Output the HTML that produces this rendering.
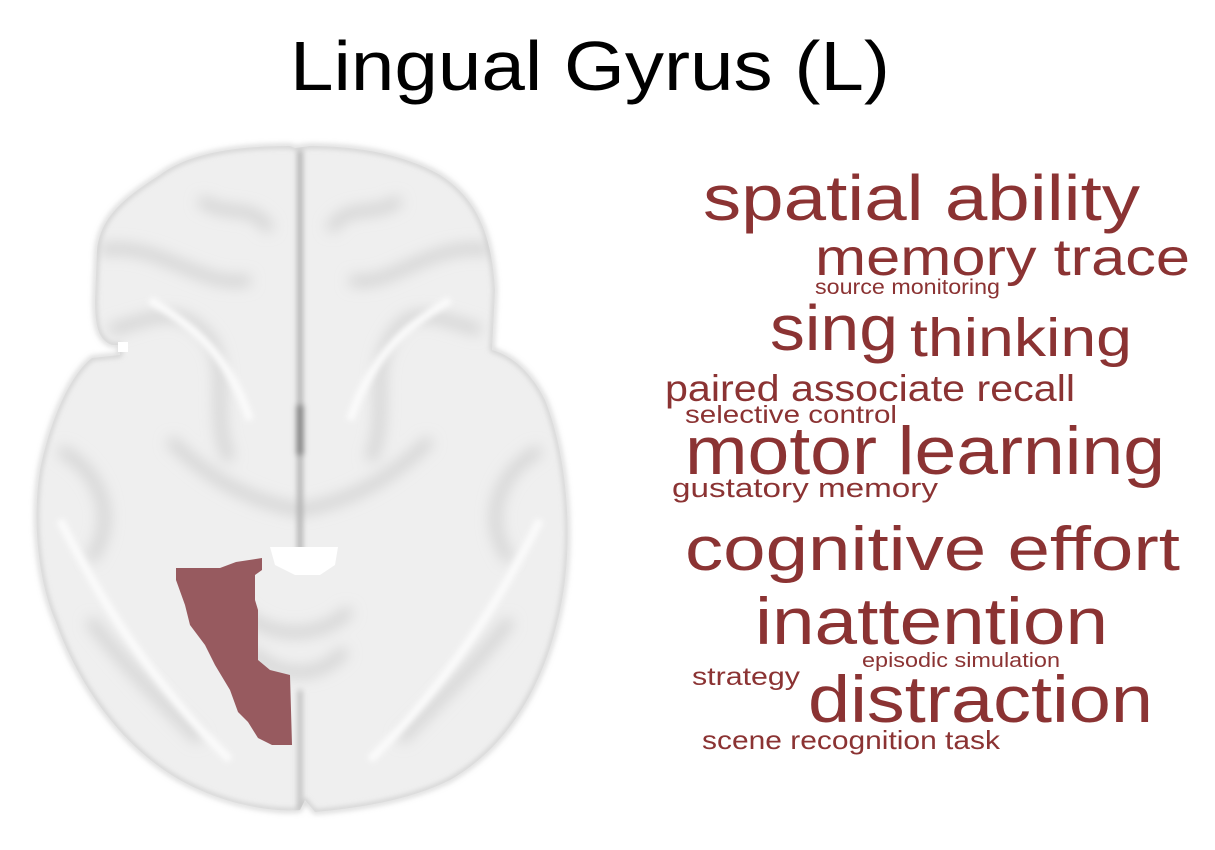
<!DOCTYPE html>
<html><head><meta charset="utf-8"><style>
html,body{margin:0;padding:0;background:#fff;width:1215px;height:850px;overflow:hidden}
</style></head><body>
<svg width="1215" height="850" viewBox="0 0 1215 850" xmlns="http://www.w3.org/2000/svg">
<defs>
<filter id="b" filterUnits="userSpaceOnUse" x="0" y="100" width="650" height="750"><feGaussianBlur stdDeviation="7"/></filter>
<filter id="b2" filterUnits="userSpaceOnUse" x="0" y="100" width="650" height="750"><feGaussianBlur stdDeviation="3"/></filter>
<clipPath id="brain"><path d="M295,148 L290,146 C240,146 190,152 160,175 C120,200 100,220 97,250 L95,300 C95,325 98,340 112,345 L120,345 L120,355 L92,358 C70,375 50,420 40,470 C32,520 38,580 55,620 C80,690 130,760 200,790 C240,808 280,812 300,810 L305,800 L315,812 C360,808 410,800 450,780 C520,740 555,660 565,580 C572,520 565,450 545,400 C530,370 510,355 492,350 L495,290 C492,240 480,200 440,175 C400,152 350,146 310,146 Z"/></clipPath>
</defs>
<text x="590" y="90" text-anchor="middle" font-family="Liberation Sans, sans-serif" font-size="70" fill="#000" textLength="600" lengthAdjust="spacingAndGlyphs">Lingual Gyrus (L)</text>

<g clip-path="url(#brain)">
<rect x="0" y="130" width="620" height="700" fill="#efefef"/>
<g fill="none" stroke="#d0d0d0" stroke-width="10" filter="url(#b)">
<path d="M100,250 C160,240 200,290 250,280"/>
<path d="M490,250 C430,240 390,290 350,280"/>
<path d="M110,330 C150,320 180,300 210,340 C230,370 210,420 230,460"/>
<path d="M480,330 C440,320 410,300 390,340 C370,370 390,420 370,460"/>
<path d="M60,450 C100,470 120,520 90,560"/>
<path d="M540,450 C500,470 480,520 510,560"/>
<path d="M170,440 C200,470 240,500 300,510 C360,500 400,470 430,440"/>
<path d="M240,610 C270,640 320,640 350,610"/>
<path d="M250,650 C280,680 320,680 345,650"/>
<path d="M90,620 C120,660 160,700 200,740"/>
<path d="M510,620 C480,660 440,700 400,740"/>
<path d="M200,200 C230,220 250,200 270,230"/>
<path d="M400,200 C370,220 350,200 330,230"/>
</g>
<g fill="none" filter="url(#b2)">
<path d="M300,150 L300,560" stroke="#aaaaaa" stroke-width="5"/>
<path d="M300,690 L300,810" stroke="#bdbdbd" stroke-width="5"/>
<path d="M300,405 L300,455" stroke="#808080" stroke-width="7"/>
</g>
<g fill="none" stroke="#fbfbfb" stroke-width="8" filter="url(#b2)">
<path d="M150,300 C200,330 230,360 250,420"/>
<path d="M450,300 C400,330 370,360 350,420"/>
<path d="M60,520 C100,600 150,680 230,760"/>
<path d="M540,520 C500,600 450,680 370,760"/>
</g>
</g>
<path d="M295,148 L290,146 C240,146 190,152 160,175 C120,200 100,220 97,250 L95,300 C95,325 98,340 112,345 L120,345 L120,355 L92,358 C70,375 50,420 40,470 C32,520 38,580 55,620 C80,690 130,760 200,790 C240,808 280,812 300,810 L305,800 L315,812 C360,808 410,800 450,780 C520,740 555,660 565,580 C572,520 565,450 545,400 C530,370 510,355 492,350 L495,290 C492,240 480,200 440,175 C400,152 350,146 310,146 Z" fill="none" stroke="#b8b8b8" stroke-width="2.5" filter="url(#b2)"/>
<rect x="118" y="342" width="10" height="10" fill="#fff"/>
<path d="M270,547 L338,547 L335,565 L320,575 L295,575 L275,565 Z" fill="#fff"/>
<path d="M176,568 L220,568 L236,562 L262,558 L262,570 L255,575 L255,600 L258,610 L258,660 L270,670 L290,675 L292,745 L272,745 L258,738 L248,722 L238,712 L230,690 L215,665 L205,645 L190,625 L185,605 L176,580 Z" fill="#975a5f"/>

<g font-family="Liberation Sans, sans-serif" fill="#8b3333">
<text x="703" y="220" font-size="64" textLength="437" lengthAdjust="spacingAndGlyphs">spatial ability</text>
<text x="815" y="275" font-size="52" textLength="375" lengthAdjust="spacingAndGlyphs">memory trace</text>
<text x="815" y="294" font-size="21" textLength="185" lengthAdjust="spacingAndGlyphs">source monitoring</text>
<text x="770" y="350" font-size="64" textLength="128" lengthAdjust="spacingAndGlyphs">sing</text>
<text x="910" y="356" font-size="54" textLength="222" lengthAdjust="spacingAndGlyphs">thinking</text>
<text x="665" y="401" font-size="37" textLength="410" lengthAdjust="spacingAndGlyphs">paired associate recall</text>
<text x="685" y="423" font-size="25" textLength="212" lengthAdjust="spacingAndGlyphs">selective control</text>
<text x="685" y="474" font-size="68" textLength="480" lengthAdjust="spacingAndGlyphs">motor learning</text>
<text x="672" y="497" font-size="27" textLength="266" lengthAdjust="spacingAndGlyphs">gustatory memory</text>
<text x="685" y="570" font-size="62" textLength="495" lengthAdjust="spacingAndGlyphs">cognitive effort</text>
<text x="755" y="644" font-size="66" textLength="353" lengthAdjust="spacingAndGlyphs">inattention</text>
<text x="862" y="667" font-size="20" textLength="198" lengthAdjust="spacingAndGlyphs">episodic simulation</text>
<text x="692" y="685" font-size="25" textLength="108" lengthAdjust="spacingAndGlyphs">strategy</text>
<text x="808" y="722" font-size="66" textLength="345" lengthAdjust="spacingAndGlyphs">distraction</text>
<text x="702" y="749" font-size="26" textLength="298" lengthAdjust="spacingAndGlyphs">scene recognition task</text>
</g>
</svg>
</body></html>
